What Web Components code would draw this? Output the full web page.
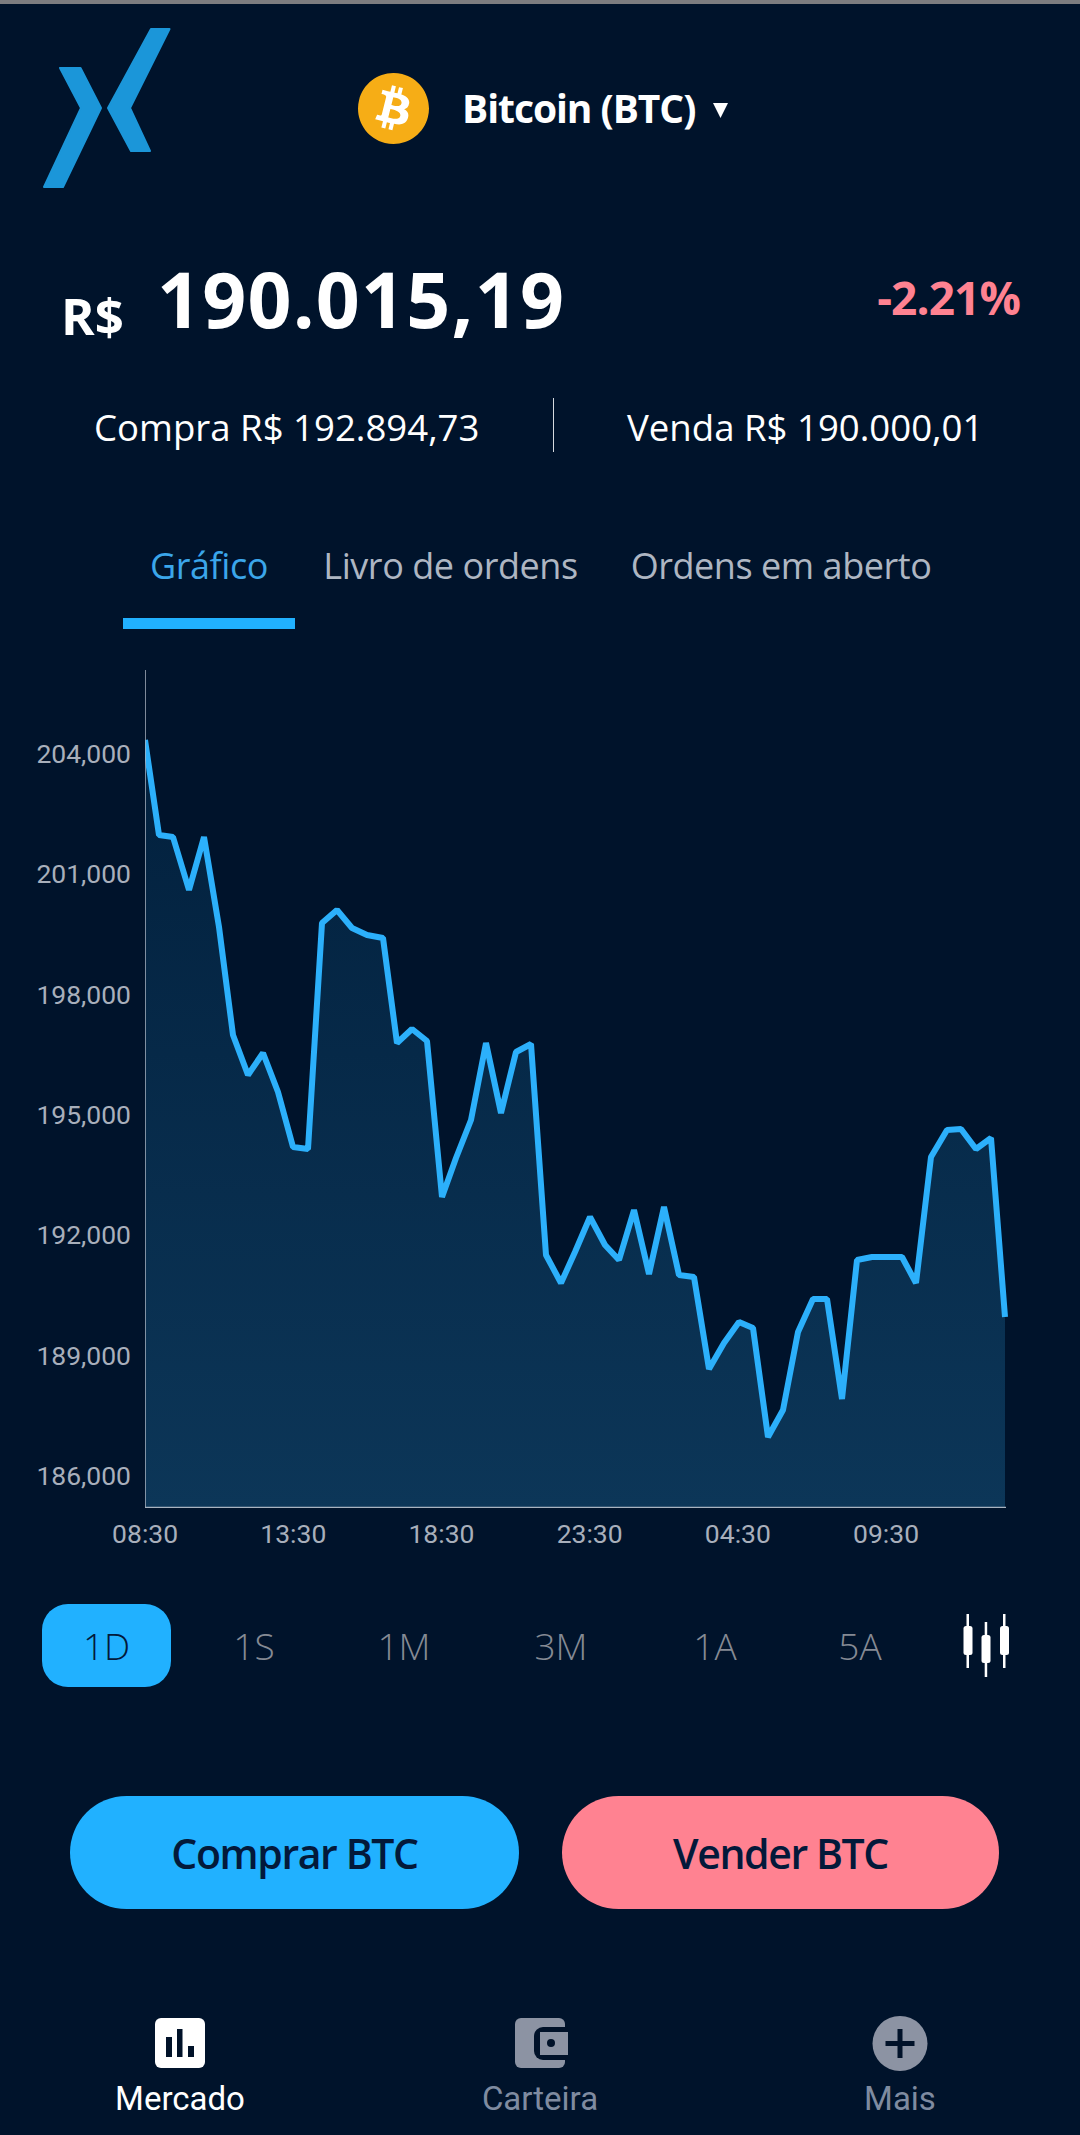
<!DOCTYPE html>
<html lang="pt-BR">
<head>
<meta charset="utf-8">
<title>Bitcoin</title>
<style>
html,body{margin:0;padding:0;background:#00132b}
</style>
</head>
<body>
<x-app>
  <x-header></x-header>
  <x-price value="190.015,19" change="-2.21%"></x-price>
  <x-quotes buy="Compra R$ 192.894,73" sell="Venda R$ 190.000,01"></x-quotes>
  <x-tabs>
    <x-tab active style="width:172px">Gráfico</x-tab>
    <x-tab style="width:253px;margin-left:29px">Livro de ordens</x-tab>
    <x-tab style="width:298px;margin-left:55px">Ordens em aberto</x-tab>
  </x-tabs>
  <x-chart></x-chart>
  <x-ranges>
    <x-range active style="width:129px">1D</x-range>
    <x-range style="width:166px">1S</x-range>
    <x-range style="width:134px">1M</x-range>
    <x-range style="width:180px">3M</x-range>
    <x-range style="width:128px">1A</x-range>
    <x-range style="width:162px">5A</x-range>
    <x-candles></x-candles>
  </x-ranges>
  <x-actions>
    <x-cta color="#21b1ff" style="width:449px">Comprar BTC</x-cta>
    <x-cta color="#ff8291" style="width:437px;margin-left:43px">Vender BTC</x-cta>
  </x-actions>
  <x-nav>
    <x-nav-item active label="Mercado"><svg viewBox="155 2015 50 56" width="50" height="56"><rect x="155" y="2018" width="50" height="50" rx="6" fill="#fff"/><path fill="#011229" d="M166 2037h6v20h-6zM177 2029h5.500v28H177zM188 2046h6v11h-6z"/></svg></x-nav-item>
    <x-nav-item label="Carteira"><svg viewBox="512 2015 56 56" width="56" height="56"><rect x="515" y="2018" width="50" height="50" rx="6" fill="#8c93a3"/><path fill="#011229" d="M568 2027h-25a9 9 0 0 0-9 9v15a9 9 0 0 0 9 9h25z"/><rect x="540" y="2032" width="28" height="23" fill="#8c93a3"/><circle cx="551" cy="2043" r="4" fill="#011229"/></svg></x-nav-item>
    <x-nav-item label="Mais"><svg viewBox="872 2015 56 56" width="56" height="56"><circle cx="900" cy="2043.500" r="27.500" fill="#8c93a3"/><path fill="#011229" d="M897.500 2029h5v12h12v5h-12v12h-5v-12h-12v-5h12z"/></svg></x-nav-item>
  </x-nav>
</x-app>
<script>
const FONT = '"Open Sans","Noto Sans",sans-serif';
function def(name, css, html, extra) {
  const tpl = document.createElement('template');
  tpl.innerHTML = `<style>${css}</style>${html}`;
  customElements.define(name, class extends HTMLElement {
    constructor() { super(); this.attachShadow({mode:'open'}).appendChild(tpl.content.cloneNode(true)); }
    connectedCallback() { if (extra) extra(this, this.shadowRoot); }
  });
}
def('x-app', `:host{display:flex;flex-direction:column;width:1080px;height:2135px;overflow:hidden;background:#00132b;color:#fff;font-family:${FONT};box-sizing:border-box}
 .status{flex:0 0 4px;background:#7d7d80}`,
 `<div class="status"></div><slot></slot>`);

def('x-header', `:host{display:flex;align-items:center;padding:24px 0 0 42px}
 .coin{margin-left:187px;width:71px;height:71px;display:block}
 .name{margin-left:33px;font-size:39px;font-weight:700;letter-spacing:-1.050px;line-height:56px;white-space:nowrap}
 .tri{margin-left:18px;margin-top:4px;width:15px;height:15px;display:block}`,
 `<svg width="129" height="160" viewBox="42 28 129 160"><path fill="#1b96d9" stroke="#1b96d9" stroke-width="2" stroke-linejoin="round" d="M151 29h18.500L130 108l20 43h-19L108 108zM60 68h20.500l20.500 40-38 79H44l37-79z"/></svg>
  <svg class="coin" viewBox="0 0 24 24"><circle cx="12" cy="12" r="8" fill="#fff"/><path fill="#f6ad16" d="M23.638 14.904c-1.602 6.43-8.113 10.34-14.542 8.736C2.67 22.05-1.244 15.525.362 9.105 1.962 2.67 8.475-1.243 14.9.358c6.43 1.605 10.342 8.115 8.738 14.548v-.002zm-6.35-4.613c.24-1.59-.974-2.45-2.64-3.03l.54-2.153-1.315-.33-.525 2.107c-.345-.087-.705-.167-1.064-.25l.526-2.127-1.32-.33-.54 2.165c-.285-.067-.565-.132-.84-.2l-1.815-.45-.35 1.407s.975.225.955.236c.535.136.63.486.615.766l-1.477 5.92c-.075.166-.24.406-.614.314.015.02-.96-.24-.96-.24l-.66 1.51 1.71.426.93.242-.54 2.19 1.32.327.54-2.17c.36.1.705.19 1.05.273l-.51 2.154 1.32.33.545-2.19c2.24.427 3.93.257 4.64-1.774.57-1.637-.03-2.58-1.217-3.196.854-.193 1.5-.76 1.68-1.93h.01zm-3.01 4.22c-.404 1.64-3.157.75-4.05.53l.72-2.9c.896.23 3.757.67 3.33 2.37zm.41-4.24c-.37 1.49-2.662.735-3.405.55l.654-2.64c.744.18 3.137.524 2.75 2.084v.006z"/></svg>
  <span class="name">Bitcoin (BTC)</span>
  <svg class="tri" viewBox="0 0 15 15"><path fill="#fff" d="M0 0h15L7.500 15z"/></svg>`);

def('x-price', `:host{display:flex;align-items:flex-start;height:90px;margin-top:72px;padding:0 60px 0 61px}
 span{line-height:1;white-space:nowrap;font-weight:700}
 .cur{font-size:51px;margin-top:30px;flex:0 0 65px}
 .val{font-size:77px;margin-left:31px;letter-spacing:1.200px}
 .chg{font-size:46px;margin-left:auto;margin-top:14px;color:#ff8291;letter-spacing:-.900px}`,
 `<span class="cur">R$</span><span class="val"></span><span class="chg"></span>`,
 (h,s)=>{s.querySelector('.val').textContent=h.getAttribute('value');s.querySelector('.chg').textContent=h.getAttribute('change');});

def('x-quotes', `:host{display:flex;height:54px;margin-top:48px;padding-left:94px;font-size:36.600px;line-height:58px;font-weight:400}
 span{white-space:nowrap}
 .l{width:459px}
 .d{width:1px;background:#d5d9de}
 .r{margin-left:73px}`,
 `<span class="l"></span><div class="d"></div><span class="r"></span>`,
 (h,s)=>{s.querySelector('.l').textContent=h.getAttribute('buy');s.querySelector('.r').textContent=h.getAttribute('sell');});

def('x-tabs', `:host{display:flex;margin-top:85px;padding-left:123px}`, `<slot></slot>`);
def('x-tab', `:host{display:flex;flex-direction:column;align-items:center;height:92px;font-size:36px;letter-spacing:-.450px;line-height:58px;color:#aeb6c2;white-space:nowrap}
 :host([active]){color:#3ba6ea}
 .bar{margin-top:23px;width:100%;height:11px;background:transparent}
 :host([active]) .bar{background:#21b1ff}`,
 `<slot></slot><div class="bar"></div>`);

const PTS = [[145,740],[159,835],[173,837],[189,890],[204,837],[219,927],[233,1035],[248,1075],[263,1053],[278,1092],[293,1147],[308,1149],[322,923],[337,910],[352,928],[367,935],[383,938],[397,1043],[412,1029],[427,1041],[442,1197],[456,1158],[471,1120],[486,1043],[501,1113],[516,1052],[531,1044],[546,1255],[561,1283],[575,1252],[590,1217],[605,1245],[619,1260],[634,1210],[649,1274],[664,1207],[679,1275],[694,1277],[709,1369],[724,1343],[739,1322],[753,1328],[768,1437],[783,1410],[798,1332],[813,1299],[827,1299],[842,1399],[857,1260],[872,1257],[887,1257],[902,1257],[916,1283],[931,1157],[947,1130],[961,1129],[976,1149],[991,1138],[1005,1317]];
const line = PTS.map(p=>p.join(',')).join(' ');
def('x-chart', `:host{display:block;margin-top:41px;font-family:Roboto,sans-serif;font-size:26.500px;color:#a8afbb}
 .top{display:flex;height:838px}
 .y{flex:0 0 145px;box-sizing:border-box;padding:24px 14px 0 0;text-align:right}
 .y div{height:120.330px;line-height:120.330px}
 svg{display:block}
 .x{display:flex;margin:11px 0 0 71px}
 .x div{flex:0 0 148.200px;text-align:center;line-height:30px}`,
 `<div class="top"><div class="y"><div>204,000</div><div>201,000</div><div>198,000</div><div>195,000</div><div>192,000</div><div>189,000</div><div>186,000</div></div>
 <svg width="870" height="838" viewBox="145 670 870 838">
  <defs><linearGradient id="g" x1="0" y1="740" x2="0" y2="1507" gradientUnits="userSpaceOnUse"><stop offset="0" stop-color="#02203d"/><stop offset="1" stop-color="#0c3658"/></linearGradient></defs>
  <polygon fill="url(#g)" points="145,1507 ${line} 1005,1507"/>
  <polyline fill="none" stroke="#2cb0fb" stroke-width="6" stroke-linejoin="bevel" points="${line}"/>
  <path d="M145 670V1507.500H1006" fill="none" stroke="#a9b3c0" stroke-width="1.500"/>
 </svg></div>
 <div class="x"><div>08:30</div><div>13:30</div><div>18:30</div><div>23:30</div><div>04:30</div><div>09:30</div></div>`);

def('x-ranges', `:host{display:flex;align-items:center;height:83px;margin-top:55px;padding-left:42px}`, `<slot></slot>`);
def('x-range', `:host{display:flex;align-items:center;justify-content:center;height:83px;font-size:37px;font-weight:300;color:#858a94;flex:none}
 :host([active]){background:#21b1ff;color:#03193a;border-radius:26px}`, `<slot></slot>`);
def('x-candles', `:host{display:block;margin-left:22px;width:48px;height:63px;align-self:flex-start;margin-top:10px}
 svg{display:block}`,
 `<svg width="48" height="63" viewBox="963 1614 48 63" fill="#fff"><rect x="966.500" y="1614" width="2.500" height="54"/><rect x="963.500" y="1626" width="9" height="29" rx="2.500"/><rect x="984.700" y="1622" width="2.500" height="55"/><rect x="981.500" y="1635" width="9" height="28" rx="2.500"/><rect x="1003" y="1614" width="2.500" height="54"/><rect x="1000" y="1626" width="9" height="29" rx="2.500"/></svg>`);

def('x-actions', `:host{display:flex;margin-top:109px;padding-left:70px}`, `<slot></slot>`);
def('x-cta', `:host{display:flex;align-items:center;justify-content:center;height:113px;border-radius:56.500px;font-size:41px;font-weight:600;letter-spacing:-1.400px;color:#03193a;flex:none;white-space:nowrap}`,
 `<slot></slot>`, (h)=>{h.style.background=h.getAttribute('color');});

def('x-nav', `:host{display:flex;margin-top:106px}`, `<slot></slot>`);
def('x-nav-item', `:host{flex:0 0 360px;display:flex;flex-direction:column;align-items:center;font-family:Roboto,sans-serif;font-size:33px;line-height:38px;color:#7f8ba0}
 :host([active]){color:#fff}
 .i{height:56px;margin-bottom:9px;display:flex;justify-content:center}`,
 `<div class="i"><slot></slot></div><span class="t"></span>`,
 (h,s)=>{s.querySelector('.t').textContent=h.getAttribute('label');});
</script>
</body>
</html>
